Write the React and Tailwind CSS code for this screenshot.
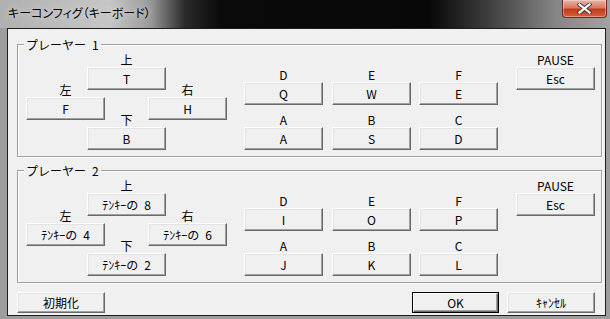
import React from "react";

const font = "font-['Noto_Sans_CJK_JP',sans-serif]";

function Label({ children }) {
  return <div className="h-[15px] text-center text-[12px] leading-[15px] text-black">{children}</div>;
}

function Btn({ children }) {
  return (
    <div className="flex h-[23px] w-[79px] items-center justify-center border border-t-white border-l-white border-r-[#696969] border-b-[#696969] bg-[#f0f0f0] text-[12px] leading-none text-black shadow-[inset_-1px_-1px_0_#a0a0a0,inset_1px_1px_0_#e3e3e3]">
      {children}
    </div>
  );
}

function Group({ title, keys }) {
  return (
    <div className="relative h-[113px] w-[585px] border border-[#a0a0a0] shadow-[1px_1px_0_#fff,inset_1px_1px_0_#fff]">
      <span className="absolute -top-[8px] left-[6px] bg-[#f0f0f0] px-[2px] text-[12px] leading-[15px] text-black">
        {title}
      </span>
      <div className="flex items-start">
        {/* direction pad */}
        <div className="ml-[8px] grid grid-cols-[61px_18px_43px_18px_61px]">
          <div className="col-span-2 col-start-1 row-start-1 flex flex-col pt-[37px]">
            <Label>左</Label>
            <Btn>{keys.left}</Btn>
          </div>
          <div className="col-span-3 col-start-2 row-start-1 flex flex-col pt-[7px]">
            <Label>上</Label>
            <Btn>{keys.up}</Btn>
            <div className="mt-[22px]">
              <Label>下</Label>
            </div>
            <Btn>{keys.down}</Btn>
          </div>
          <div className="col-span-2 col-start-4 row-start-1 flex flex-col pt-[37px]">
            <Label>右</Label>
            <Btn>{keys.right}</Btn>
          </div>
        </div>

        {/* buttons */}
        <div className="ml-[17px] flex flex-col pt-[22px]">
          <Label>D</Label>
          <Btn>{keys.d}</Btn>
          <div className="mt-[7px]">
            <Label>A</Label>
          </div>
          <Btn>{keys.a}</Btn>
        </div>
        <div className="ml-[9px] flex flex-col pt-[22px]">
          <Label>E</Label>
          <Btn>{keys.e}</Btn>
          <div className="mt-[7px]">
            <Label>B</Label>
          </div>
          <Btn>{keys.b}</Btn>
        </div>
        <div className="ml-[8px] flex flex-col pt-[22px]">
          <Label>F</Label>
          <Btn>{keys.f}</Btn>
          <div className="mt-[7px]">
            <Label>C</Label>
          </div>
          <Btn>{keys.c}</Btn>
        </div>

        {/* pause */}
        <div className="ml-[18px] flex flex-col pt-[7px]">
          <Label>PAUSE</Label>
          <Btn>Esc</Btn>
        </div>
      </div>
    </div>
  );
}

const p1 = { up: "T", left: "F", right: "H", down: "B", d: "Q", e: "W", f: "E", a: "A", b: "S", c: "D" };
const p2 = {
  up: "ﾃﾝｷｰの\u20028",
  left: "ﾃﾝｷｰの\u20024",
  right: "ﾃﾝｷｰの\u20026",
  down: "ﾃﾝｷｰの\u20022",
  d: "I",
  e: "O",
  f: "P",
  a: "J",
  b: "K",
  c: "L",
};

export default function App() {
  return (
    <div className={`flex h-[319px] w-[610px] flex-col overflow-hidden bg-[#9d9d9d] ${font}`}>
      {/* title bar */}
      <div className="flex h-[28px] shrink-0 items-start justify-between bg-[linear-gradient(90deg,#b0b0b0_0px,#c6c6c6_110px,#9a9a9a_150px,#2a2a2a_185px,#0a0a0a_220px,#080808_430px,#3a3a3a_485px,#858585_555px,#a2a2a2_610px)]">
        <div className="pl-[8px] pt-[5px] text-[12px] leading-[16px] text-black [font-feature-settings:'palt'] [text-shadow:0_0_6px_#e8e8e8]">
          キーコンフィグ（キーボード）
        </div>
        <div className="mr-[3px] flex h-[18px] w-[45px] items-center justify-center rounded-b-[4px] border border-t-0 border-[#6b2a20] bg-[linear-gradient(180deg,#eab3a4_0%,#d77a62_45%,#c23a1e_55%,#d8603c_100%)] shadow-[inset_0_0_0_1px_rgba(255,255,255,0.35)]">
          <svg width="15" height="11" viewBox="0 0 15 11">
            <path d="M2.5 1.5 L12.5 9.5 M12.5 1.5 L2.5 9.5" stroke="#3a3a3a" strokeWidth="4" strokeLinecap="square" />
            <path d="M2.5 1.5 L12.5 9.5 M12.5 1.5 L2.5 9.5" stroke="#fff" strokeWidth="2.2" strokeLinecap="square" />
          </svg>
        </div>
      </div>

      {/* client */}
      <div className="flex-1 pb-[3px] pl-[7px] pr-[4px]">
        <div className="flex h-[288px] flex-col border border-[#1e1e1e] bg-[#f0f0f0] pl-[9px] pr-[3px] pt-[15px]">
          <Group title={"プレーヤー\u20021"} keys={p1} />
          <div className="mt-[13px]">
            <Group title={"プレーヤー\u20022"} keys={p2} />
          </div>

          <div className="mt-[9px] flex pr-[7px]">
            <div className="flex h-[21px] w-[88px] items-center justify-center border border-t-white border-l-white border-r-[#696969] border-b-[#696969] bg-[#f0f0f0] text-[12px] leading-none text-black shadow-[inset_-1px_-1px_0_#a0a0a0,inset_1px_1px_0_#e3e3e3]">
              初期化
            </div>
            <div className="ml-auto h-[21px] w-[87px] border border-black">
              <div className="flex h-full w-full items-center justify-center border border-t-white border-l-white border-r-[#696969] border-b-[#696969] bg-[#f0f0f0] text-[12px] leading-none text-black shadow-[inset_-1px_-1px_0_#a0a0a0]">
                OK
              </div>
            </div>
            <div className="ml-[8px] flex h-[21px] w-[88px] items-center justify-center border border-t-white border-l-white border-r-[#696969] border-b-[#696969] bg-[#f0f0f0] text-[12px] leading-none text-black shadow-[inset_-1px_-1px_0_#a0a0a0,inset_1px_1px_0_#e3e3e3]">
              ｷｬﾝｾﾙ
            </div>
          </div>
        </div>
      </div>
    </div>
  );
}
